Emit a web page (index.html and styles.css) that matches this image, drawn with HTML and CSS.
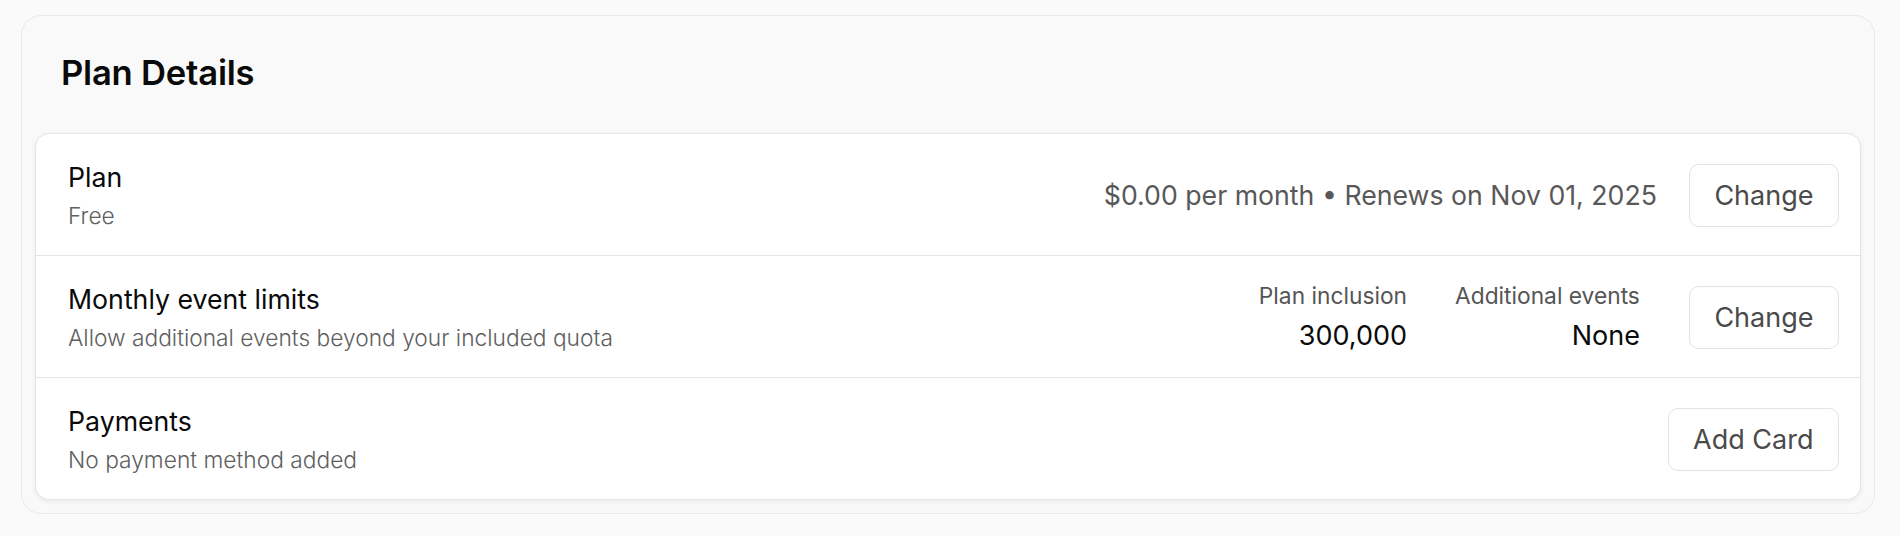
FILE: index.html
```html
<!DOCTYPE html>
<html lang="en">
<head>
<meta charset="utf-8">
<title>Plan Details</title>
<link rel="stylesheet" href="styles.css">
</head>
<body>
<section class="panel">
  <h2 class="panel-title">Plan Details</h2>
  <div class="card">
    <div class="row">
      <div class="info">
        <div class="label">Plan</div>
        <div class="sub">Free</div>
      </div>
      <div class="actions">
        <span class="meta">$0.00 per month • Renews on Nov 01, 2025</span>
        <button class="btn">Change</button>
      </div>
    </div>
    <div class="row">
      <div class="info">
        <div class="label">Monthly event limits</div>
        <div class="sub">Allow additional events beyond your included quota</div>
      </div>
      <div class="actions">
        <div class="stats">
          <div class="stat">
            <div class="stat-label">Plan inclusion</div>
            <div class="stat-value">300,000</div>
          </div>
          <div class="stat">
            <div class="stat-label">Additional events</div>
            <div class="stat-value">None</div>
          </div>
        </div>
        <button class="btn">Change</button>
      </div>
    </div>
    <div class="row">
      <div class="info">
        <div class="label">Payments</div>
        <div class="sub">No payment method added</div>
      </div>
      <div class="actions">
        <button class="btn">Add Card</button>
      </div>
    </div>
  </div>
</section>
</body>
</html>
```

FILE: styles.css
```css
* { box-sizing: border-box; }

body {
  margin: 0;
  padding: 15px 25px 24px 21px;
  background: #fafafa;
  font-family: Inter, "Noto Sans", "Liberation Sans", sans-serif;
  color: #0a0a0a;
}

.panel {
  background: #f9f9f9;
  border: 1px solid #e9e9e9;
  border-radius: 20px;
  padding: 0 13px 13px;
}

.panel-title {
  margin: 0;
  padding: 31px 0 35px 26px;
  font-size: 34.6px;
  line-height: 51px;
  font-weight: 600;
  letter-spacing: -0.2px;
  color: #0a0a0a;
}

.card {
  background: #ffffff;
  border: 1px solid #e5e5e5;
  border-radius: 14px;
  box-shadow: 0 2px 5px rgba(0, 0, 0, 0.06);
}

.row {
  display: flex;
  align-items: center;
  justify-content: space-between;
  padding: 23px 21px 22px 32px;
}

.row + .row {
  border-top: 1px solid #e5e5e5;
}

.label {
  font-size: 26.7px;
  line-height: 40px;
  font-weight: 400;
  color: #0a0a0a;
}

.sub {
  margin-top: 2px;
  font-size: 22.75px;
  line-height: 34px;
  font-weight: 300;
  color: #606060;
}

.actions {
  display: flex;
  align-items: center;
  gap: 32px;
}

.meta {
  font-size: 26.7px;
  line-height: 39px;
  color: #585858;
}

.stats {
  display: flex;
  gap: 48px;
  margin-right: 17px;
  text-align: right;
}

.stat-label {
  font-size: 22.75px;
  line-height: 34px;
  color: #555555;
}

.stat-value {
  margin-top: 3px;
  font-size: 27px;
  line-height: 39px;
  color: #0a0a0a;
}

.btn {
  height: 63px;
  padding: 0 24.5px;
  background: #ffffff;
  border: 1px solid #e3e3e3;
  border-radius: 10px;
  font-family: inherit;
  font-size: 27px;
  color: #4a4a4a;
  cursor: pointer;
}
```
